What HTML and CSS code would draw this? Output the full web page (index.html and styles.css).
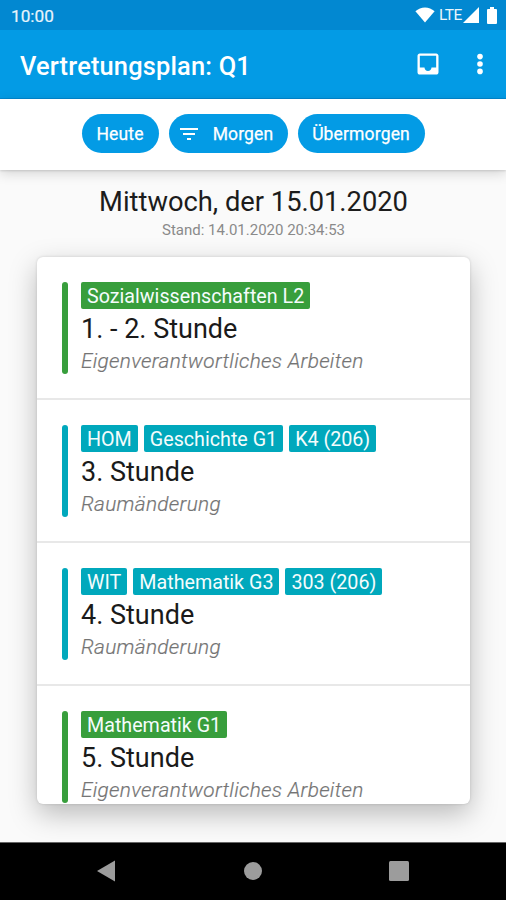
FILE: index.html
```html
<!DOCTYPE html>
<html lang="de">
<head>
<meta charset="utf-8">
<title>Vertretungsplan: Q1</title>
<link rel="stylesheet" href="styles.css">
</head>
<body>
<div class="screen">
  <div class="status">
    <span class="clock">10:00</span>
    <div class="signals">
      <svg class="wifi" width="20" height="16" viewBox="0 0 20 16"><path d="M10 15.6 0.4 4.2Q4.6 0.4 10 0.4T19.6 4.2Z"/></svg>
      <span class="lte">LTE</span>
      <svg class="cell" width="16" height="16" viewBox="0 0 16 16"><path d="M0 16 16 0V16Z"/></svg>
      <svg class="battery" width="10" height="17" viewBox="0 0 10 17"><path d="M3 0h4v2h2q1 0 1 1v13q0 1-1 1H1q-1 0-1-1V3q0-1 1-1h2Z"/></svg>
    </div>
  </div>
  <header class="toolbar">
    <h1 class="title">Vertretungsplan: Q1</h1>
    <svg class="inbox" width="28" height="28" viewBox="0 0 24 24"><path d="M19 3H4.99c-1.11 0-1.98.89-1.98 2L3 19c0 1.1.88 2 1.99 2H19c1.1 0 2-.9 2-2V5c0-1.11-.9-2-2-2zm0 12h-4c0 1.66-1.35 3-3 3s-3-1.34-3-3H4.99V5H19v10z"/></svg>
    <svg class="more" width="8" height="22" viewBox="0 0 8 22"><circle cx="4" cy="3.6" r="2.8"/><circle cx="4" cy="11" r="2.8"/><circle cx="4" cy="18.4" r="2.8"/></svg>
  </header>
  <nav class="days">
    <button class="chip heute">Heute</button>
    <button class="chip morgen"><svg width="18" height="12" viewBox="0 0 18 12"><path d="M0 0h18v2H0zM3 5h12v2H3zM7 10h4v2H7z"/></svg>Morgen</button>
    <button class="chip uebermorgen">Übermorgen</button>
  </nav>
  <main class="content">
    <h2 class="date">Mittwoch, der 15.01.2020</h2>
    <p class="stand">Stand: 14.01.2020 20:34:53</p>
    <section class="card">
      <article class="entry green">
        <div class="bar"></div>
        <div>
          <div class="tags"><span class="tag">Sozialwissenschaften L2</span></div>
          <div class="hour">1. - 2. Stunde</div>
          <div class="note">Eigenverantwortliches Arbeiten</div>
        </div>
      </article>
      <article class="entry teal">
        <div class="bar"></div>
        <div>
          <div class="tags"><span class="tag">HOM</span><span class="tag">Geschichte G1</span><span class="tag">K4 (206)</span></div>
          <div class="hour">3. Stunde</div>
          <div class="note">Raumänderung</div>
        </div>
      </article>
      <article class="entry teal">
        <div class="bar"></div>
        <div>
          <div class="tags"><span class="tag">WIT</span><span class="tag">Mathematik G3</span><span class="tag">303 (206)</span></div>
          <div class="hour">4. Stunde</div>
          <div class="note">Raumänderung</div>
        </div>
      </article>
      <article class="entry green">
        <div class="bar"></div>
        <div>
          <div class="tags"><span class="tag">Mathematik G1</span></div>
          <div class="hour">5. Stunde</div>
          <div class="note">Eigenverantwortliches Arbeiten</div>
        </div>
      </article>
    </section>
  </main>
  <footer class="navbar">
    <svg width="18" height="22" viewBox="0 0 18 22"><path d="M0 11 18 .5v21Z"/></svg>
    <svg width="18" height="18" viewBox="0 0 18 18"><circle cx="9" cy="9" r="9"/></svg>
    <svg width="20" height="20" viewBox="0 0 20 20"><rect width="20" height="20" rx="1.5"/></svg>
  </footer>
</div>
</body>
</html>
```
FILE: styles.css
```css
* { box-sizing: border-box; }
body { margin: 0; font-family: Roboto, sans-serif; }
h1, h2, p { margin: 0; }
svg { display: block; flex: none; }
.screen { width: 506px; height: 900px; display: flex; flex-direction: column; overflow: hidden; background: #fafafa; }

.status { height: 30px; flex: none; background: #0288d1; color: #e9f5fc; display: flex; justify-content: space-between; padding: 0 9px 0 11px; fill: #fff; }
.clock { font-size: 17.2px; line-height: 32px; -webkit-text-stroke: .2px #e9f5fc; }
.signals { display: flex; height: 30px; align-items: center; }
.lte { font-size: 15.5px; font-weight: 400; line-height: 31px; letter-spacing: -.5px; margin-left: 4px; width: 24px; }
.battery { margin-left: 8px; }

.toolbar { height: 69px; flex: none; background: #039be5; border-bottom: 1px solid #0288d1; color: #fff; fill: #fff; display: flex; align-items: center; padding: 0 22px 0 20px; }
.title { flex: 1; font-size: 25.4px; font-weight: 500; line-height: 30px; padding-top: 4px; letter-spacing: .18px; }
.more { margin-left: 34px; }

.days { position: relative; height: 71px; flex: none; background: #fff; display: flex; justify-content: center; align-items: flex-start; gap: 10px; padding-top: 15px; box-shadow: 0 1px 2px rgba(0,0,0,.12), 0 3px 12px rgba(0,0,0,.16); }
.chip { height: 39px; border: 0; border-radius: 20px; background: #039be5; color: #fff; fill: #fff; font: 400 17.5px Roboto, sans-serif; letter-spacing: .15px; -webkit-text-stroke: .25px #fff; padding: 0; display: flex; align-items: center; justify-content: center; }
.heute { width: 77px; }
.morgen { width: 119px; gap: 15px; padding-right: 3px; }
.uebermorgen { width: 127px; }

.content { height: 672px; flex: none; padding: 16px 36px 0 37px; background: #fafafa; overflow: hidden; }
.date { text-align: center; font-size: 27.3px; font-weight: 400; line-height: 32px; color: #1c1c1c; }
.stand { text-align: center; font-size: 15px; line-height: 20px; margin-top: 2px; color: #8a8a8a; }
.card { height: 547px; margin-top: 17px; background: #fff; border-radius: 6px; position: relative; box-shadow: 0 10px 28px rgba(0,0,0,.26), 0 0 3px rgba(0,0,0,.14); overflow: hidden; }
.entry { height: 143px; display: flex; gap: 13px; padding: 25px 25px 0; border-bottom: 2px solid #e8e8e8; }
.bar { width: 6px; height: 92px; border-radius: 3px; background: currentColor; flex: none; }
.green { color: #389e3c; }
.teal { color: #00a8bc; }
.tags { display: flex; gap: 6px; height: 27px; }
.tag { background: currentColor; border-radius: 2px; padding: 0 6px; font-size: 19.7px; line-height: 29px; white-space: nowrap; }
.tag::first-line { color: #f5fcfc; }
.hour { color: #1a1a1a; font-size: 27px; line-height: 32px; margin-top: 4px; }
.note { color: #747474; font-size: 20.8px; letter-spacing: .3px; font-style: italic; font-weight: 300; line-height: 26px; margin-top: 3px; -webkit-text-stroke: .2px #747474; }

.navbar { flex: 1; background: #000; border-top: 1px solid #666; fill: #9c9c9c; display: flex; justify-content: space-between; align-items: center; padding: 0 97px 1px; }
.navbar circle { transform: translateX(1px); }
.navbar svg { overflow: visible; }
```
